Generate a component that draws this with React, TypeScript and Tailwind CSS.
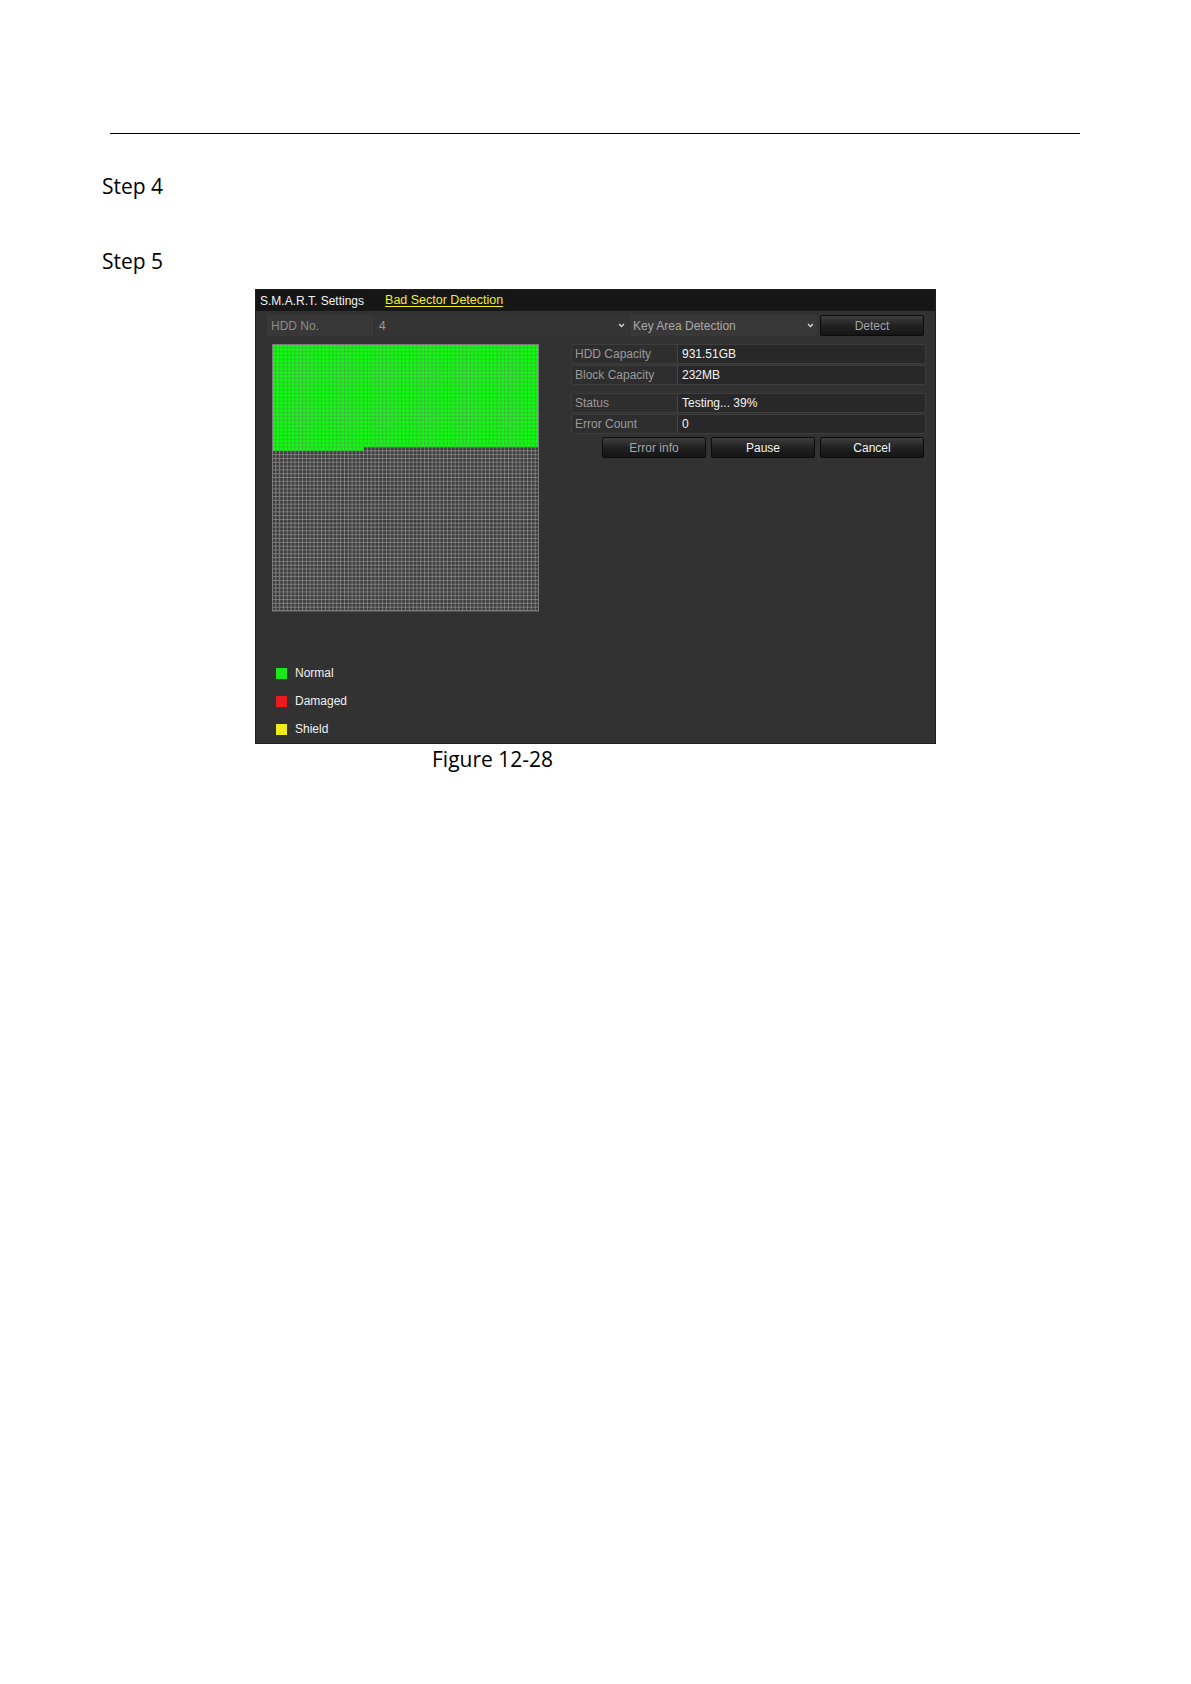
import React from "react";

const COLS = 70;
const ROWS = 70;
const FULL_ROWS = 27;
const EXTRA = 24;

function SectorGrid() {
  const size = 267;
  const c = size / COLS;
  const lines: string[] = [];
  for (let i = 0; i <= COLS; i++) {
    const x = (i * c).toFixed(2);
    lines.push(`M${x} 0V${size}`);
  }
  for (let j = 0; j <= ROWS; j++) {
    const y = (j * c).toFixed(2);
    lines.push(`M0 ${y}H${size}`);
  }
  const gy = FULL_ROWS * c;
  const gx = EXTRA * c;
  const greenPath = `M0 0H${size}V${gy}H${gx}V${gy + c}H0Z`;
  return (
    <svg width={size} height={size + 1} viewBox={`0 0 ${size} ${size + 1}`} className="block">
      <rect x="0" y="0" width={size} height={size} fill="#3e3e3e" />
      <path d={lines.join("")} stroke="#969696" strokeOpacity="0.85" strokeWidth="0.8" fill="none" />
      <path d={greenPath} fill="#12f812" />
      <clipPath id="greenClip">
        <path d={greenPath} />
      </clipPath>
      <path
        d={lines.join("")}
        stroke="#5f8a5f"
        strokeOpacity="0.7"
        strokeWidth="0.65"
        fill="none"
        clipPath="url(#greenClip)"
      />
      <rect x="0.5" y="0.5" width={size - 1} height={size - 1} fill="none" stroke="#7a7a7a" strokeWidth="1" />
    </svg>
  );
}

function Chevron() {
  return (
    <svg width="7" height="5" viewBox="0 0 7 5" className="block">
      <path d="M1 1L3.5 3.5L6 1" stroke="#d8d8d8" strokeWidth="1.3" fill="none" />
    </svg>
  );
}

function InfoRow({ label, value }: { label: string; value: string }) {
  return (
    <div className="flex h-[20px] rounded-[2px] border border-[#3d3d3d] bg-[#282828]">
      <div className="flex w-[106px] items-center border-r border-[#444] bg-[#2e2e2e] pl-[3px] text-[#9a9a9a]">
        {label}
      </div>
      <div className="flex flex-1 items-center pl-[4px] text-[#f4f4f4]">{value}</div>
    </div>
  );
}

function DvrButton({ label, dim }: { label: string; dim?: boolean }) {
  return (
    <div
      className={`flex h-[21px] w-[104px] items-center justify-center rounded-[2px] border border-[#0c0c0c] bg-gradient-to-b from-[#3e3e3e] via-[#222] to-[#151515] ${
        dim ? "text-[#a4a4a4]" : "text-[#f4f4f4]"
      }`}
    >
      {label}
    </div>
  );
}

function LegendItem({ color, label }: { color: string; label: string }) {
  return (
    <div className="flex h-[28px] items-center">
      <div className={`h-[11px] w-[11px] ${color}`} />
      <span className="ml-[8px] text-[#f0f0f0]">{label}</span>
    </div>
  );
}

export default function App() {
  return (
    <div className="relative h-[1684px] w-[1191px] overflow-hidden bg-white">
      <div className="ml-[110px] mt-[133px] h-px w-[970px] bg-black" />
      <div
        className="ml-[102px] mt-[38px] text-[21px] leading-[28px] text-black"
        style={{ fontFamily: '"Open Sans", "Noto Sans", sans-serif' }}
      >
        Step 4
      </div>
      <div
        className="ml-[102px] mt-[47px] text-[21px] leading-[28px] text-black"
        style={{ fontFamily: '"Open Sans", "Noto Sans", sans-serif' }}
      >
        Step 5
      </div>

      <div
        className="ml-[255px] mt-[14px] flex h-[455px] w-[681px] flex-col border border-[#1e1e1e] bg-[#323232] text-[12px] leading-none"
        style={{ fontFamily: '"Liberation Sans", Arial, sans-serif' }}
      >
        {/* title bar */}
        <div className="flex h-[21px] shrink-0 items-center bg-[#161616] pl-[4px]">
          <span className="text-[#f2f2f2]">S.M.A.R.T. Settings</span>
          <span className="ml-[21px] text-[12.5px] text-[#f2ee2a] underline underline-offset-2">
            Bad Sector Detection
          </span>
        </div>

        {/* HDD row */}
        <div className="ml-[11px] mt-[4px] flex h-[21px] items-stretch">
          <div className="flex w-[106px] items-center bg-[#383838] pl-[4px] text-[#8c8c8c]">HDD No.</div>
          <div className="flex w-[255px] items-center justify-between bg-[#343434] pl-[6px] pr-[3px] text-[#9a9a9a]">
            <span>4</span>
            <Chevron />
          </div>
          <div className="ml-[2px] flex w-[187px] items-center justify-between bg-[#383838] pl-[3px] pr-[3px] text-[#a8a8a8]">
            <span>Key Area Detection</span>
            <Chevron />
          </div>
          <div className="ml-[3px]">
            <DvrButton label="Detect" dim />
          </div>
        </div>
        <div className="mx-[11px] mt-[3px] h-px bg-[#404040]" />

        {/* main */}
        <div className="mt-[5px] flex">
          <div className="ml-[16px]">
            <SectorGrid />
          </div>
          <div className="ml-[32px] flex w-[355px] flex-col">
            <InfoRow label="HDD Capacity" value="931.51GB" />
            <div className="mt-px">
              <InfoRow label="Block Capacity" value="232MB" />
            </div>
            <div className="mt-[8px]">
              <InfoRow label="Status" value="Testing... 39%" />
            </div>
            <div className="mt-px">
              <InfoRow label="Error Count" value="0" />
            </div>
            <div className="mt-[3px] flex justify-end gap-[5px] pr-[2px]">
              <DvrButton label="Error info" dim />
              <DvrButton label="Pause" />
              <DvrButton label="Cancel" />
            </div>
          </div>
        </div>

        {/* legend */}
        <div className="ml-[20px] mt-[47px] flex flex-col">
          <LegendItem color="bg-[#1be81b]" label="Normal" />
          <LegendItem color="bg-[#e81c1c]" label="Damaged" />
          <LegendItem color="bg-[#f2ec1c]" label="Shield" />
        </div>
      </div>

      <div
        className="ml-[432px] mt-px text-[21px] leading-[28px] text-black"
        style={{ fontFamily: '"Open Sans", "Noto Sans", sans-serif' }}
      >
        Figure 12-28
      </div>
    </div>
  );
}
